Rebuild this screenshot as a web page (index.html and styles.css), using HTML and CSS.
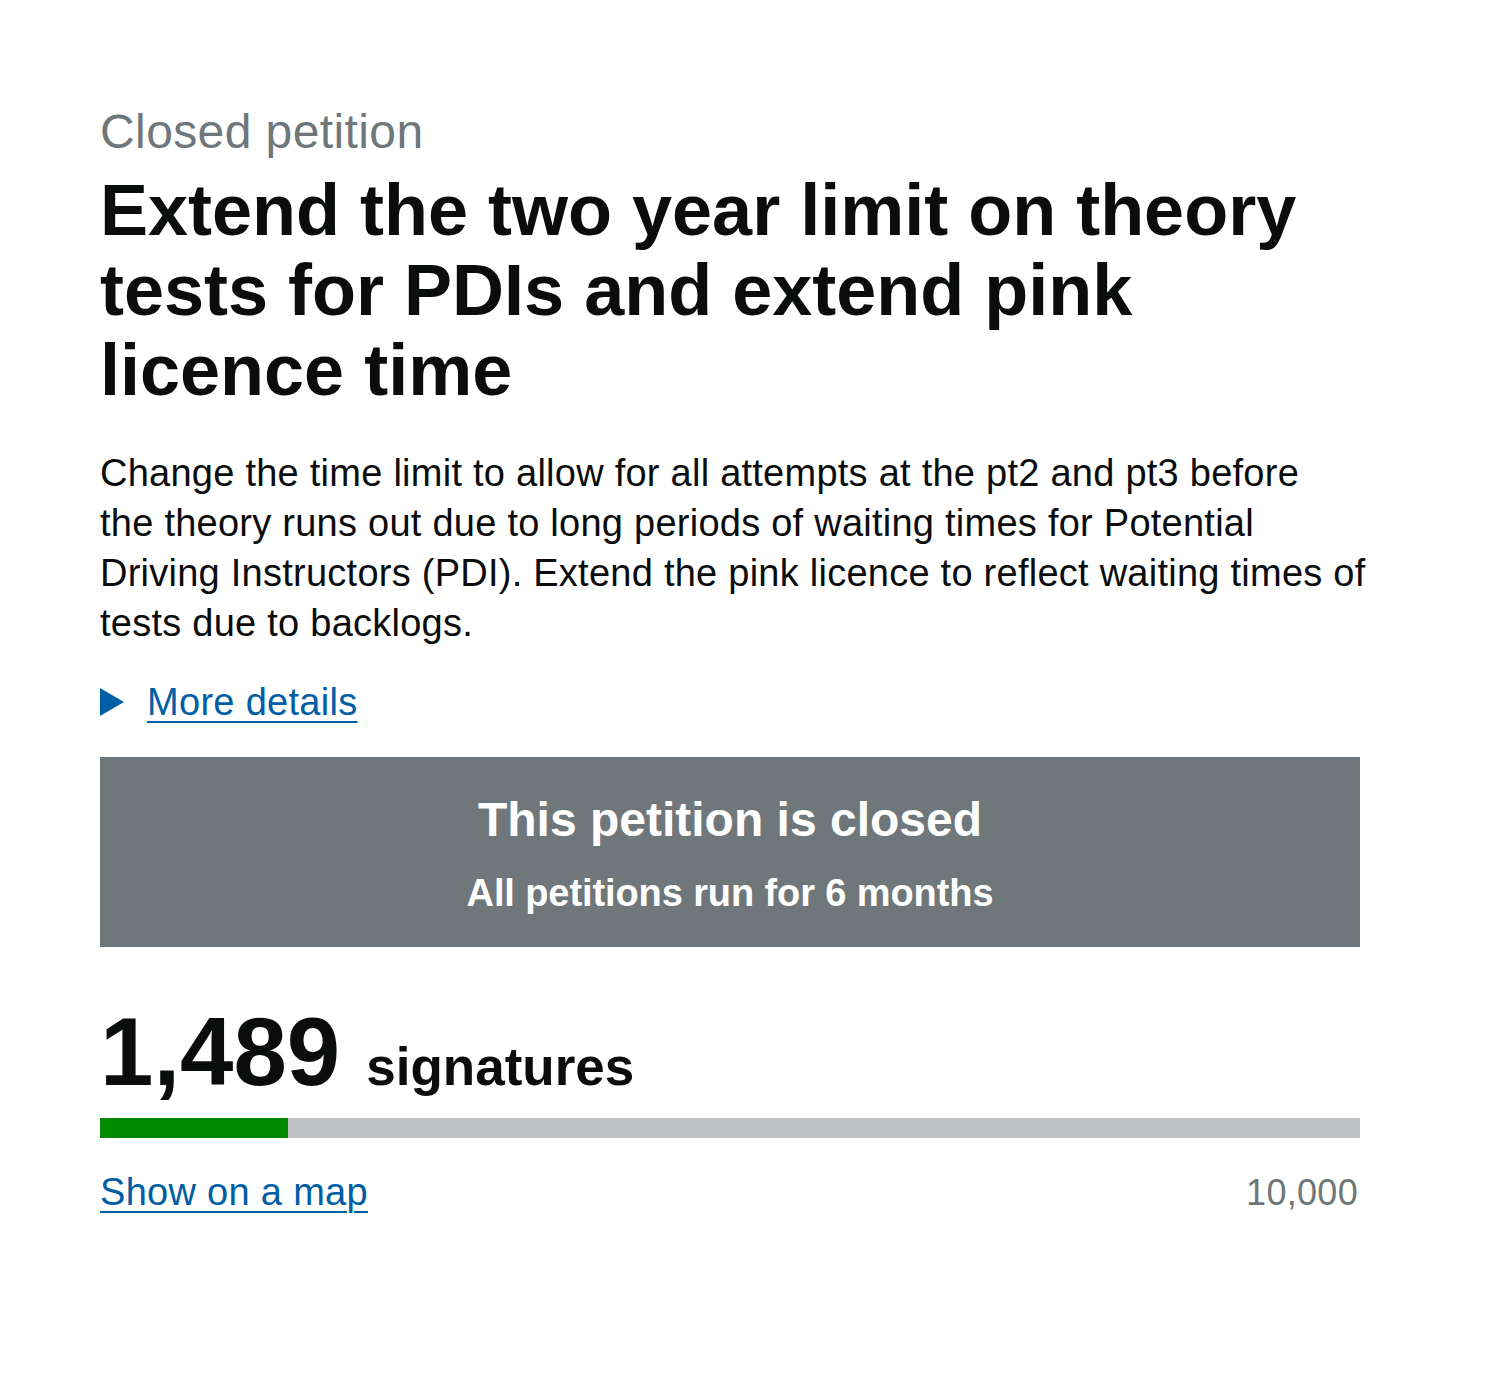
FILE: index.html
```html
<!DOCTYPE html>
<html lang="en">
<head>
<meta charset="utf-8">
<title>Extend the two year limit on theory tests for PDIs and extend pink licence time</title>
<link rel="stylesheet" href="styles.css">
</head>
<body>
<main class="page">
  <p class="kicker">Closed petition</p>
  <h1 class="title">Extend the two year limit on theory tests for PDIs and extend pink licence time</h1>
  <p class="summary">Change the time limit to allow for all attempts at the pt2 and pt3 before the&nbsp;theory runs out due to long periods of waiting times for Potential Driving Instructors (PDI). Extend the pink licence to reflect waiting times of tests due to backlogs.</p>
  <div class="details">
    <span class="details-arrow" aria-hidden="true"></span>
    <a class="link" href="#">More details</a>
  </div>
  <section class="notice">
    <h2 class="notice-title">This petition is closed</h2>
    <p class="notice-sub">All petitions run for 6 months</p>
  </section>
  <section class="signatures">
    <p class="count"><span class="count-num">1,489</span><span class="count-label">signatures</span></p>
    <div class="progress"><div class="progress-fill" style="width: 14.89%"></div></div>
    <div class="progress-foot">
      <a class="link" href="#">Show on a map</a>
      <span class="target">10,000</span>
    </div>
  </section>
</main>
</body>
</html>
```

FILE: styles.css
```css
html, body {
  margin: 0;
  padding: 0;
  background: #ffffff;
}

body {
  font-family: "Liberation Sans", Arial, Helvetica, sans-serif;
  color: #0b0c0c;
}

.page {
  width: 1260px;
  padding: 102px 0 100px 100px;
}

.kicker {
  margin: 0;
  font-size: 48px;
  line-height: 60px;
  letter-spacing: 0.4px;
  color: #6f777b;
}

.title {
  margin: 8px 0 0;
  font-size: 72px;
  line-height: 80px;
  font-weight: 700;
}

.summary {
  margin: 38px 0 0;
  width: 1272px;
  font-size: 38px;
  line-height: 50px;
  letter-spacing: 0.25px;
}

.details {
  margin-top: 29px;
  display: flex;
  align-items: center;
  height: 50px;
}

.details-arrow {
  width: 0;
  height: 0;
  border-style: solid;
  border-width: 14px 0 14px 24px;
  border-color: transparent transparent transparent #005ea5;
  margin-right: 23px;
}

.link {
  font-size: 38px;
  line-height: 50px;
  letter-spacing: 0.3px;
  color: #005ea5;
  text-decoration: underline;
  text-decoration-thickness: 2px;
  text-underline-offset: 6px;
}

.notice {
  margin-top: 30px;
  background: #6f777b;
  color: #ffffff;
  text-align: center;
  padding: 38px 20px 29px;
}

.notice-title {
  margin: 0;
  font-size: 48px;
  line-height: 50px;
  font-weight: 700;
}

.notice-sub {
  margin: 23px 0 0;
  font-size: 38px;
  line-height: 50px;
  font-weight: 700;
  letter-spacing: -0.1px;
}

.signatures {
  margin-top: 55px;
}

.count {
  margin: 0;
  font-size: 96px;
  line-height: 100px;
  font-weight: 700;
}

.count-label {
  font-size: 53px;
  line-height: 1;
  margin-left: 26px;
}

.progress {
  margin-top: 16px;
  height: 20px;
  background: #bfc1c3;
}

.progress-fill {
  height: 100%;
  background: #008a00;
}

.progress-foot {
  margin-top: 29px;
  display: flex;
  justify-content: space-between;
  align-items: baseline;
}

.target {
  font-size: 36px;
  line-height: 50px;
  letter-spacing: 0.3px;
  color: #6f777b;
  margin-right: 2px;
}
```
